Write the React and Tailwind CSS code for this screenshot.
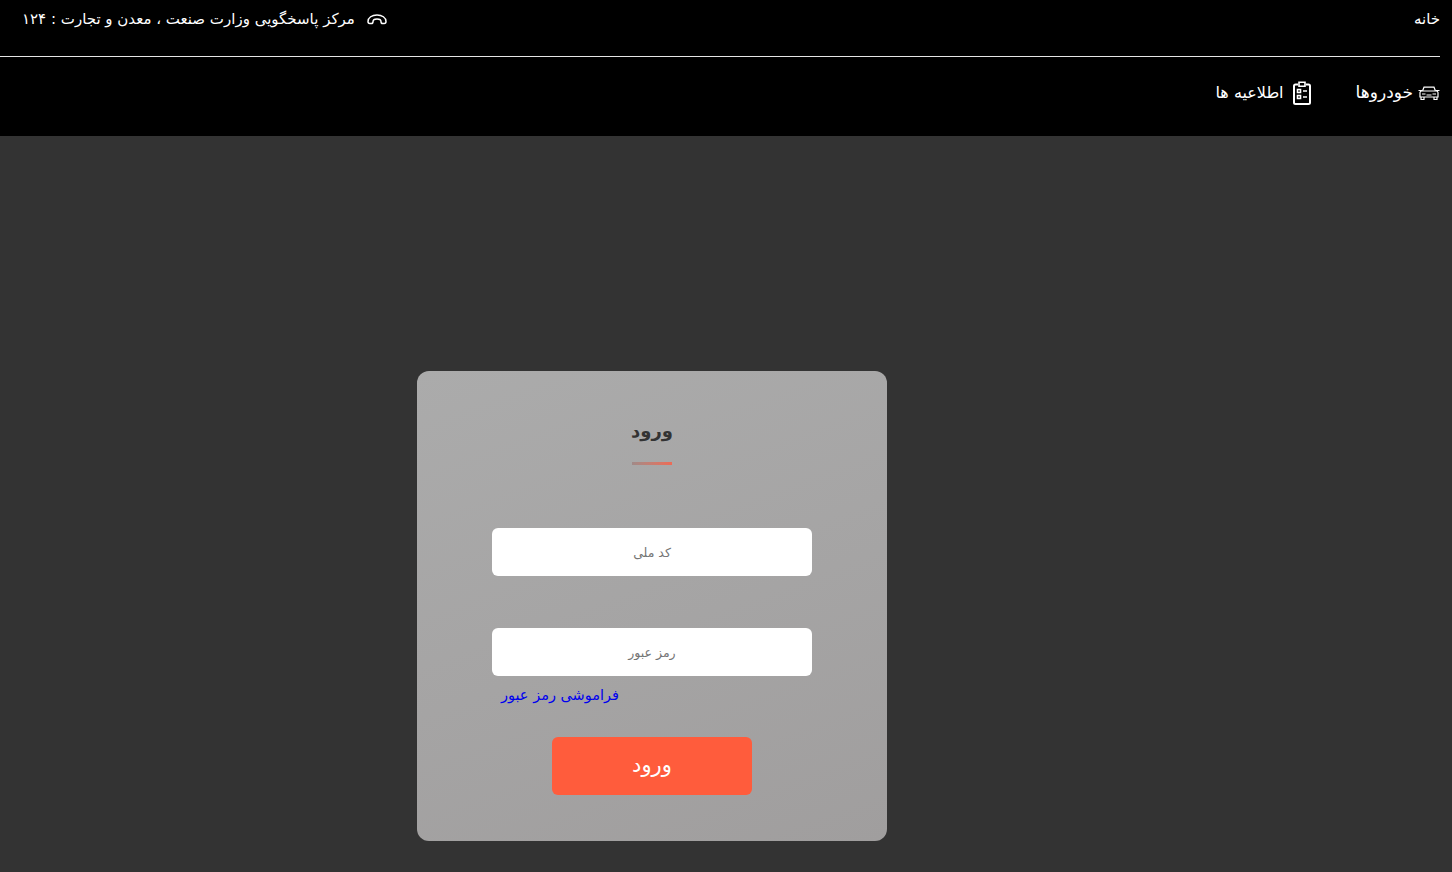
const font = { fontFamily: '"DejaVu Sans", "Noto Sans", sans-serif' };

const PhoneIcon = () => (
  <svg width="20" height="11" viewBox="0 0 20 11" fill="none" stroke="white" strokeWidth="1.500">
    <path d="M1 7.500C1 3.500 5 1 10 1s9 2.500 9 6.500c0 1.200-.8 2-1.800 2h-1.400c-1 0-1.800-.7-1.800-1.800C14 6 12.200 5 10 5S6 6 6 7.700C6 8.800 5.200 9.500 4.200 9.500H2.800C1.800 9.500 1 8.700 1 7.500z" />
  </svg>
);

const CarIcon = () => (
  <svg width="22" height="14" viewBox="0 0 22 14" fill="none" stroke="white" strokeWidth="1.200">
    <path d="M4.500 5l1.500-3.800h10L17.500 5M.5 4.500h3.500M18 4.500h3.500M2 6.500c0-1 1-1.500 2-1.500h14c1 0 2 .5 2 1.500V11H2zM3 11v2.500h3V11M16 11v2.500h3V11M4 8h3.500M14.500 8H18M8.500 9h5" />
  </svg>
);

const ClipboardIcon = () => (
  <svg width="18" height="24" viewBox="0 0 18 24" fill="none" stroke="white" strokeWidth="2">
    <path d="M5 3.500H2.500A1.500 1.500 0 0 0 1 5v16.500A1.500 1.500 0 0 0 2.500 23h13a1.500 1.500 0 0 0 1.500-1.500V5a1.500 1.500 0 0 0-1.500-1.500H13" />
    <path d="M6 1.200h6v4H6z" strokeWidth="1.600" />
    <path d="M4.500 8.500h3v3h-3zM4.500 14.500h3v3h-3zM10 10h4M10 16h4" strokeWidth="1.600" />
  </svg>
);

const Field = ({ placeholder, type }) => (
  <input
    type={type}
    placeholder={placeholder}
    style={font}
    className="w-full h-12 bg-white rounded-md text-center text-[12.500px] text-gray-700 placeholder:text-[#757575] outline-none"
  />
);

export default function App() {
  return (
    <div dir="rtl" style={font} className="min-h-[872px] bg-[#333333] text-white">
      <header className="h-[136px] bg-black">
        <div className="h-[57px] mr-3 border-b border-[#e5e5e5] flex justify-between items-start pt-[9px] text-[15px] leading-[20px]">
          <a>خانه</a>
          <div className="flex items-center gap-3 pl-[22px]">
            <PhoneIcon />
            <span>مرکز پاسخگویی وزارت صنعت ، معدن و تجارت : ۱۲۴</span>
          </div>
        </div>
        <nav className="flex items-center gap-[45px] pr-3 h-[72px] text-base">
          <a className="flex items-center gap-[5px]"><CarIcon /><span className="text-[17px]">خودروها</span></a>
          <a className="flex items-center gap-[9px]"><ClipboardIcon /><span>اطلاعیه ها</span></a>
        </nav>
      </header>

      <main className="w-[1304px] flex justify-center pt-[235px] ml-auto mr-[148px]">
        <form className="w-[470px] h-[470px] rounded-xl bg-[linear-gradient(160deg,#ababab,#a09e9e)] flex flex-col items-center pt-[46px]">
          <h1 className="text-[18px] font-bold leading-7 text-[#333333]">ورود</h1>
          <div className="w-10 h-[3px] mt-[17px] bg-gradient-to-l from-[#ed6a55] to-[#a08a88]" />
          <div className="w-80 mt-[63px]"><Field placeholder="کد ملی" type="text" /></div>
          <div className="w-80 mt-[52px]"><Field placeholder="رمز عبور" type="password" /></div>
          <div className="w-80 mt-[9px] pl-[9px] flex justify-end">
            <a className="text-[14.500px] leading-5 text-[#0000ee]">فراموشی رمز عبور</a>
          </div>
          <button type="button" style={font} className="w-[200px] h-[58px] mt-[32px] bg-[#ff5c3c] rounded-md text-[21px] text-white">ورود</button>
        </form>
      </main>
    </div>
  );
}
